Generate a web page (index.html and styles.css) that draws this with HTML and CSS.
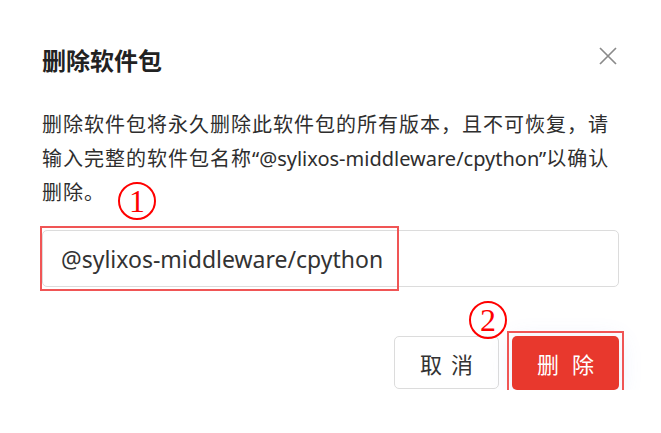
FILE: index.html
```html
<!DOCTYPE html>
<html lang="zh-CN">
<head>
<meta charset="utf-8">
<title>删除软件包</title>
<link rel="stylesheet" href="styles.css">
</head>
<body>
<div class="dialog">
  <div class="header">
    <h1 class="title">删除软件包</h1>
    <button class="close" aria-label="关闭">
      <svg width="18" height="18" viewBox="0 0 18 18"><path d="M1 1 L17 17 M17 1 L1 17" stroke="#8a8a8a" stroke-width="1.7" fill="none"/></svg>
    </button>
  </div>
  <p class="desc">删除软件包将永久删除此软件包的所有版本，且不可恢复，请输入完整的软件包名称<span class="pkg">“@sylixos-middleware/cpython”</span>以确认删除。</p>
  <div class="field">
    <span class="mark mark-1">1</span>
    <div class="input">@sylixos-middleware/cpython</div>
    <span class="hl hl-input"></span>
  </div>
  <div class="actions">
    <button class="btn btn-cancel">取 消</button>
    <div class="danger-wrap">
      <span class="mark mark-2">2</span>
      <button class="btn btn-danger">删 除</button>
      <span class="hl hl-btn"></span>
    </div>
  </div>
</div>
</body>
</html>
```
FILE: styles.css
```css
html, body {
  margin: 0;
  padding: 0;
  background: #fff;
}
body {
  font-family: "Noto Sans", "Noto Sans CJK SC", sans-serif;
  color: #333;
}
.dialog {
  padding: 38px 42px 0 42px;
  width: 577px;
}
.header {
  display: flex;
  justify-content: space-between;
  align-items: center;
  height: 46px;
}
.title {
  margin: 0;
  font-size: 24px;
  font-weight: 700;
  color: #222;
  line-height: 46px;
}
.close {
  border: 0;
  background: none;
  padding: 0;
  width: 18px;
  height: 18px;
  margin-right: 2px;
  position: relative;
  top: -5px;
  cursor: pointer;
}
.close svg { display: block; }
.desc {
  margin: 24px 0 0 0;
  font-size: 20px;
  line-height: 34px;
  letter-spacing: 1px;
  color: #2e2e2e;
}
.pkg {
  letter-spacing: 0;
}
.field {
  position: relative;
  margin-top: 20px;
}
.input {
  height: 55px;
  border: 1px solid #dcdcdc;
  border-radius: 5px;
  box-sizing: content-box;
  padding-left: 18px;
  font-size: 23px;
  line-height: 57px;
  color: #333;
}
.hl {
  position: absolute;
  border: 2px solid #f05555;
  box-sizing: border-box;
  pointer-events: none;
}
.hl-input {
  left: -2px;
  top: -4px;
  width: 359px;
  height: 65px;
}
.mark {
  position: absolute;
  width: 34px;
  height: 34px;
  border: 2px solid #f00;
  border-radius: 50%;
  color: #f00;
  font-family: "Liberation Serif", serif;
  font-size: 32px;
  line-height: 34px;
  text-align: center;
}
.mark-1 {
  left: 76px;
  top: -48px;
}
.actions {
  display: flex;
  justify-content: flex-end;
  align-items: flex-start;
  gap: 13px;
  margin-top: 49px;
}
.btn {
  font-family: "Noto Sans CJK SC", sans-serif;
  font-size: 22px;
  border-radius: 5px;
  cursor: pointer;
  padding: 0;
}
.btn-cancel {
  width: 105px;
  height: 53px;
  background: #fff;
  border: 1px solid #dcdcdc;
  color: #333;
  letter-spacing: 2px;
  text-indent: 2px;
}
.danger-wrap {
  position: relative;
}
.btn-danger {
  display: block;
  width: 107px;
  height: 54px;
  background: #e8382d;
  border: 0;
  color: #fff;
  letter-spacing: 4px;
  text-indent: 4px;
  box-shadow: 0 4px 24px rgba(90, 120, 230, 0.14);
}
.hl-btn {
  left: -5px;
  top: -5px;
  width: 117px;
  height: 64px;
}
.mark-2 {
  left: -43px;
  top: -35px;
}
```
